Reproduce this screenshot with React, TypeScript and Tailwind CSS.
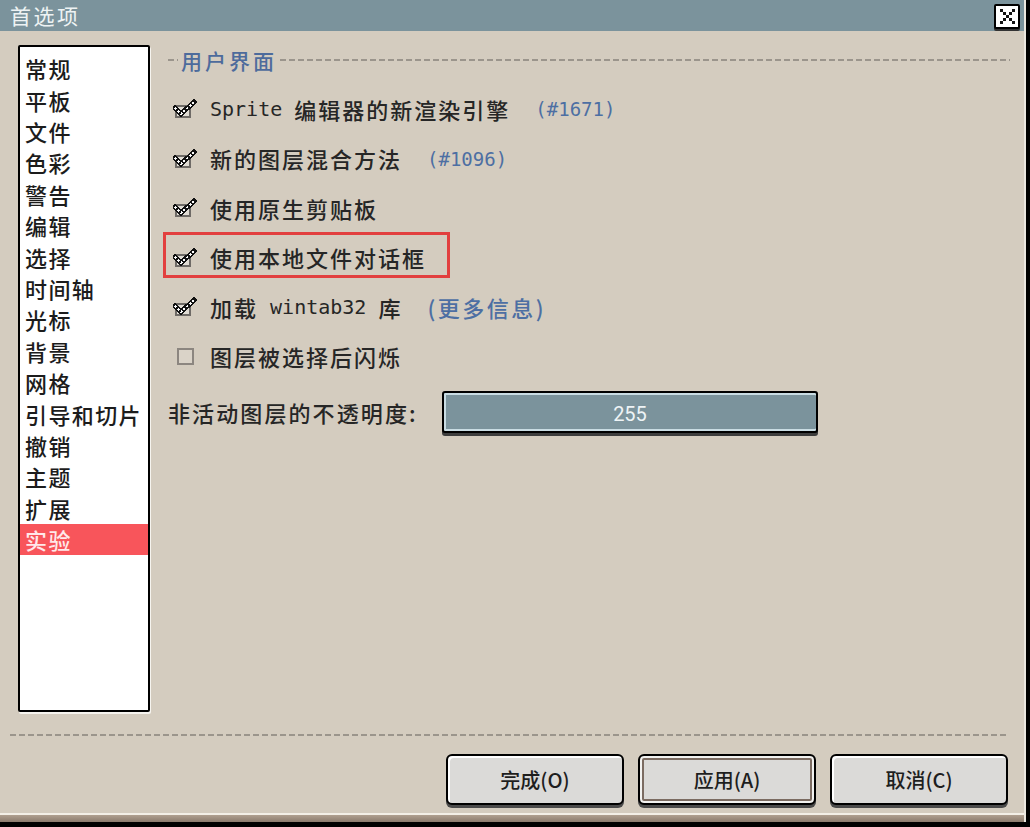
import React from "react";

const CJK = "font-['Noto_Sans_CJK_SC',sans-serif]";
const MONO = "font-['DejaVu_Sans_Mono','Noto_Sans_CJK_SC',monospace]";

const SECTIONS = [
  "常规",
  "平板",
  "文件",
  "色彩",
  "警告",
  "编辑",
  "选择",
  "时间轴",
  "光标",
  "背景",
  "网格",
  "引导和切片",
  "撤销",
  "主题",
  "扩展",
  "实验",
];

function CheckIcon() {
  return (
    <svg width="24" height="20" viewBox="0 0 24 20" shapeRendering="crispEdges">
      <rect x="3" y="7" width="14" height="11" fill="#e0dcd4" stroke="#6e6a66" strokeWidth="2" />
      <polyline points="2,9 8,15 21,3" fill="none" stroke="#111" strokeWidth="5" strokeLinecap="square" />
      <polyline points="2,9 8,15 21,3" fill="none" stroke="#fff" strokeWidth="2" strokeDasharray="2 2" />
    </svg>
  );
}

function EmptyBox() {
  return <div className="w-[17px] h-[17px] ml-[4px] mr-[1px] border-2 border-[#8c8680] bg-[#dad3c8]" />;
}

function Link({ children, mono }: { children: React.ReactNode; mono?: boolean }) {
  return (
    <span
      className={
        (mono ? MONO + " text-[19px] tracking-[0px]" : CJK + " text-[22px] tracking-[2.5px]") +
        " ml-[25px] text-[#4d6fa3]"
      }
    >
      {children}
    </span>
  );
}

function Row({ checked, children }: { checked: boolean; children: React.ReactNode }) {
  return (
    <div className="h-[49.5px] flex items-center pl-[5px]">
      <div className="w-[24px] flex items-center">{checked ? <CheckIcon /> : <EmptyBox />}</div>
      <div className="ml-[13px] flex items-center text-[22px] font-medium tracking-[2px] text-[#262626] whitespace-pre">
        {children}
      </div>
    </div>
  );
}

function Dashed({ className = "" }: { className?: string }) {
  return (
    <div
      className={
        "h-[2px] bg-[repeating-linear-gradient(90deg,#9b958c_0_6px,transparent_6px_9px)] " + className
      }
    />
  );
}

function Button({ label, focused }: { label: string; focused?: boolean }) {
  return (
    <button
      className={
        "w-[178px] h-[51px] rounded-[6px] border-2 border-black bg-[#dbdad8] text-[20px] font-medium text-[#1e1e1e] " +
        CJK +
        (focused
          ? " shadow-[inset_0_0_0_2px_#f2f2f0,inset_0_0_0_4px_#7b6b61,0_3px_0_#4a4a4a]"
          : " shadow-[inset_2px_2px_0_#ffffff,0_3px_0_#4a4a4a]")
      }
    >
      {label}
    </button>
  );
}

export default function App() {
  return (
    <div className={"w-[1030px] h-[827px] bg-black " + CJK}>
      <div className="w-[1026px] h-[822px] flex flex-col bg-[#d4ccbf] border-r-2 border-[#ebe7df]">
        {/* Title bar */}
        <div className="h-[31px] shrink-0 bg-[#7b939c] flex items-center justify-between pl-[10px] pr-[4px]">
          <span className="text-[21px] tracking-[2.5px] text-[#eef3f4] leading-none">首选项</span>
          <div className="w-[26px] h-[25px] mt-[2px] bg-white border-2 border-black rounded-[2px] shadow-[0_2px_0_#333] flex items-center justify-center">
            <svg width="15" height="15" viewBox="0 0 15 15" shapeRendering="crispEdges">
              {[0, 1, 2, 3, 4].map((i) => (
                <React.Fragment key={i}>
                  <rect x={i * 3} y={i * 3} width="3" height="3" fill="#111" />
                  <rect x={12 - i * 3} y={i * 3} width="3" height="3" fill="#111" />
                </React.Fragment>
              ))}
            </svg>
          </div>
        </div>

        {/* Body */}
        <div className="flex-1 flex flex-col">
          <div className="flex pt-[14px] pl-[18px] pr-[14px]">
            {/* Section list */}
            <div className="w-[132px] h-[667px] shrink-0 bg-white border-2 border-black rounded-[2px] shadow-[1px_2px_0_#f6f4ef] pt-[6px]">
              {SECTIONS.map((s, i) => (
                <div
                  key={s}
                  className={
                    "h-[31.4px] flex items-center pl-[5px] text-[22px] font-medium tracking-[1.4px] " +
                    (i === SECTIONS.length - 1 ? "bg-[#f8555b] text-[#ffe9ea]" : "text-[#1c1c1c]")
                  }
                >
                  {s}
                </div>
              ))}
            </div>

            {/* Settings */}
            <div className="flex-1 ml-[18px] pt-[3px]">
              <div className="h-[24px] flex items-center">
                <Dashed className="w-[10px]" />
                <span className="px-[3px] text-[21px] font-medium tracking-[3px] text-[#4d6b9c] leading-none">用户界面</span>
                <Dashed className="flex-1" />
              </div>

              <div className="mt-[12.5px]">
                <Row checked>
                  <span className={MONO + " text-[20px] tracking-[0px]"}>Sprite </span>
                  <span>编辑器的新渲染引擎</span>
                  <Link mono>(#1671)</Link>
                </Row>
                <Row checked>
                  <span>新的图层混合方法</span>
                  <Link mono>(#1096)</Link>
                </Row>
                <Row checked>
                  <span>使用原生剪贴板</span>
                </Row>
                <div className="relative">
                  <Row checked>
                    <span>使用本地文件对话框</span>
                  </Row>
                  <div className="absolute left-[-5px] top-[-1px] w-[287px] h-[46px] border-[3px] border-[#e2403f] pointer-events-none" />
                </div>
                <Row checked>
                  <span>加载</span>
                  <span className={MONO + " text-[20px] tracking-[0px]"}> wintab32 </span>
                  <span>库</span>
                  <Link>(更多信息)</Link>
                </Row>
                <Row checked={false}>
                  <span>图层被选择后闪烁</span>
                </Row>
              </div>

              <div className="mt-[9.5px] h-[42px] flex items-center">
                <span className="w-[274px] shrink-0 text-[22px] font-medium tracking-[2.1px] text-[#262626]">非活动图层的不透明度:</span>
                <div className="w-[376px] h-[42px] rounded-[3px] border-2 border-black bg-[#7b939c] shadow-[inset_0_2px_0_#c9dce3,inset_0_-2px_0_#c9dce3,inset_2px_0_0_#c9dce3,0_3px_0_#3d3d3d] flex items-center justify-center pt-[4px]">
                  <span className="font-['Roboto',sans-serif] text-[20px] text-[#eef4f6]">255</span>
                </div>
              </div>
            </div>
          </div>

          <Dashed className="mt-[22px] ml-[10px] mr-[16px]" />

          <div className="mt-[18px] flex justify-end gap-[14px] pr-[16px]">
            <Button label="完成(O)" />
            <Button label="应用(A)" focused />
            <Button label="取消(C)" />
          </div>

          <div className="flex-1 border-b-2 border-[#f3efe7]" />
        </div>
        <div className="h-[7px] shrink-0 bg-[linear-gradient(180deg,#b0a090,#8a7a6c)]" />
      </div>
    </div>
  );
}
